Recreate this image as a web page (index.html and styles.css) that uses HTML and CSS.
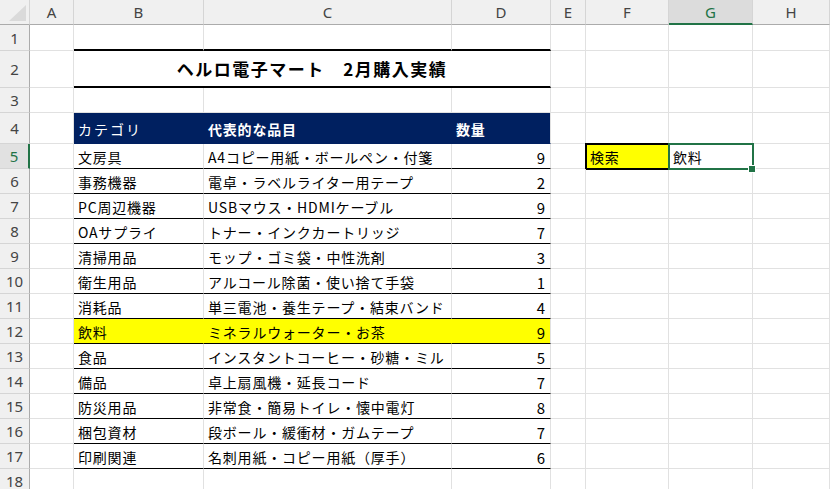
FILE: index.html
```html
<!DOCTYPE html>
<html lang="ja">
<head>
    <meta charset="UTF-8">
    <title>2月購入実績</title>
    <link rel="stylesheet" href="styles.css">
</head>
<body>
    <div class="sheet">
        <div class="row head">
            <div class="corner"><svg width="29" height="24" viewBox="0 0 29 24"><polygon points="26,5 26,21 9,21" fill="#dadada"/></svg></div>
            <div>A</div><div>B</div><div>C</div><div>D</div><div>E</div><div>F</div><div class="sel">G</div><div>H</div>
        </div>

        <div class="row r1">
            <div class="rh">1</div><div></div><div class="rule"></div><div class="rule"></div><div class="rule"></div><div></div><div></div><div></div><div></div>
        </div>
        <div class="row r2">
            <div class="rh">2</div><div></div>
            <div class="title">ヘルロ電子マート　2月購入実績</div>
            <div></div><div></div><div></div><div></div>
        </div>
        <div class="row">
            <div class="rh">3</div><div></div><div></div><div></div><div></div><div></div><div></div><div></div><div></div>
        </div>
        <div class="row r4">
            <div class="rh">4</div><div></div>
            <div class="th cat">カテゴリ</div><div class="th">代表的な品目</div><div class="th last">数量</div>
            <div></div><div></div><div></div><div></div>
        </div>

        <div class="row">
            <div class="rh sel">5</div><div></div>
            <div class="tc">文房具</div><div class="tc">A4コピー用紙・ボールペン・付箋</div><div class="tc num">9</div>
            <div></div><div class="search">検索</div><div class="active">飲料<span class="handle"></span></div><div></div>
        </div>
        <div class="row">
            <div class="rh">6</div><div></div>
            <div class="tc">事務機器</div><div class="tc">電卓・ラベルライター用テープ</div><div class="tc num">2</div>
            <div></div><div></div><div></div><div></div>
        </div>
        <div class="row">
            <div class="rh">7</div><div></div>
            <div class="tc">PC周辺機器</div><div class="tc">USBマウス・HDMIケーブル</div><div class="tc num">9</div>
            <div></div><div></div><div></div><div></div>
        </div>
        <div class="row">
            <div class="rh">8</div><div></div>
            <div class="tc">OAサプライ</div><div class="tc">トナー・インクカートリッジ</div><div class="tc num">7</div>
            <div></div><div></div><div></div><div></div>
        </div>
        <div class="row">
            <div class="rh">9</div><div></div>
            <div class="tc">清掃用品</div><div class="tc">モップ・ゴミ袋・中性洗剤</div><div class="tc num">3</div>
            <div></div><div></div><div></div><div></div>
        </div>
        <div class="row">
            <div class="rh">10</div><div></div>
            <div class="tc">衛生用品</div><div class="tc">アルコール除菌・使い捨て手袋</div><div class="tc num">1</div>
            <div></div><div></div><div></div><div></div>
        </div>
        <div class="row">
            <div class="rh">11</div><div></div>
            <div class="tc">消耗品</div><div class="tc">単三電池・養生テープ・結束バンド</div><div class="tc num">4</div>
            <div></div><div></div><div></div><div></div>
        </div>
        <div class="row">
            <div class="rh">12</div><div></div>
            <div class="tc hl">飲料</div><div class="tc hl">ミネラルウォーター・お茶</div><div class="tc hl num last">9</div>
            <div></div><div></div><div></div><div></div>
        </div>
        <div class="row">
            <div class="rh">13</div><div></div>
            <div class="tc">食品</div><div class="tc">インスタントコーヒー・砂糖・ミル</div><div class="tc num">5</div>
            <div></div><div></div><div></div><div></div>
        </div>
        <div class="row">
            <div class="rh">14</div><div></div>
            <div class="tc">備品</div><div class="tc">卓上扇風機・延長コード</div><div class="tc num">7</div>
            <div></div><div></div><div></div><div></div>
        </div>
        <div class="row">
            <div class="rh">15</div><div></div>
            <div class="tc">防災用品</div><div class="tc">非常食・簡易トイレ・懐中電灯</div><div class="tc num">8</div>
            <div></div><div></div><div></div><div></div>
        </div>
        <div class="row">
            <div class="rh">16</div><div></div>
            <div class="tc">梱包資材</div><div class="tc">段ボール・緩衝材・ガムテープ</div><div class="tc num">7</div>
            <div></div><div></div><div></div><div></div>
        </div>
        <div class="row">
            <div class="rh">17</div><div></div>
            <div class="tc">印刷関連</div><div class="tc">名刺用紙・コピー用紙（厚手）</div><div class="tc num">6</div>
            <div></div><div></div><div></div><div></div>
        </div>
        <div class="row">
            <div class="rh">18</div><div></div><div></div><div></div><div></div><div></div><div></div><div></div><div></div>
        </div>
    </div>
</body>
</html>
```

FILE: styles.css
```css
*{
    box-sizing: border-box;
}
body{
    margin: 0;
    overflow: hidden;
    background: #fff;
    font-family: "Noto Sans CJK JP", "Noto Sans", sans-serif;
    color: #000;
}
.sheet{
    width: 830px;
}
.row{
    display: grid;
    grid-template-columns: 30px 44px 130px 248px 99px 35px 83px 84px 1fr;
    height: 25px;
}
.row > div{
    display: flex;
    align-items: center;
    padding: 2px 4px 0;
    border-right: 1px solid #e1e1e1;
    border-bottom: 1px solid #e1e1e1;
    font-size: 14px;
    letter-spacing: .8px;
    white-space: nowrap;
    overflow: hidden;
}
.r1{ height: 26px; }
.r2{ height: 37px; }
.r4{ height: 31px; }

/* column + row headers */
.head > div{
    justify-content: center;
    padding: 0;
    background: #f0f0f0;
    border-right-color: #d5d5d5;
    border-bottom-color: #ababab;
    font-family: "Noto Sans", "Liberation Sans", sans-serif;
    font-size: 15px;
    letter-spacing: 0;
    color: #444;
}
.head .corner{
    align-items: flex-start;
    justify-content: flex-start;
}
.head .sel{
    background: #dcdcdc;
    border-bottom: 2px solid #217346;
    color: #217346;
}
.row > .rh{
    justify-content: center;
    padding: 0;
    background: #f0f0f0;
    border-right-color: #ababab;
    border-bottom-color: #d5d5d5;
    font-family: "Noto Sans", "Liberation Sans", sans-serif;
    font-size: 15px;
    letter-spacing: 0;
    color: #444;
}
.row > .rh.sel{
    background: #e1e1e1;
    border-right: 2px solid #217346;
    color: #217346;
}

/* table */
.row > .rule{
    border-bottom: 2px solid #000;
}
.row > .title{
    grid-column: span 3;
    justify-content: center;
    padding-top: 0;
    border-bottom: 2px solid #000;
    font-size: 17px;
    font-weight: bold;
    letter-spacing: 1.5px;
}
.row > .th{
    background: #002060;
    border-right-color: #002060;
    border-bottom-color: #002060;
    color: #fff;
    font-weight: bold;
}
.row > .th.cat{
    font-weight: normal;
    letter-spacing: 2px;
}
.row > .tc{
    border-bottom-color: #000;
}
.row > .num{
    justify-content: flex-end;
    font-size: 15px;
}
.row > .hl{
    background: #ff0;
    border-right-color: #ff0;
}
.row > .last{
    border-right-color: #e1e1e1;
}

/* search cells */
.row > .search{
    background: #ff0;
    outline: 2px solid #000;
    outline-offset: -1px;
}
.row > .active{
    position: relative;
    overflow: visible;
    outline: 2px solid #217346;
    outline-offset: -1px;
}
.handle{
    position: absolute;
    right: -3px;
    bottom: -4px;
    width: 6px;
    height: 6px;
    background: #217346;
    box-shadow: 0 0 0 1px #fff;
}
```
